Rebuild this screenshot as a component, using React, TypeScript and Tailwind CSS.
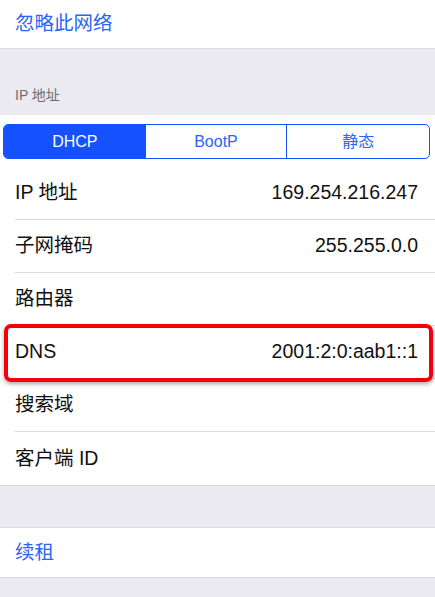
import React from "react";

const font = { fontFamily: '"Liberation Sans", "Noto Sans CJK SC", sans-serif' };

const rows = [
  { label: "IP 地址", value: "169.254.216.247" },
  { label: "子网掩码", value: "255.255.0.0" },
  { label: "路由器", value: "" },
  { label: "DNS", value: "2001:2:0:aab1::1", marked: true },
  { label: "搜索域", value: "" },
  { label: "客户端 ID", value: "" },
];

const Row = ({ label, value, marked, last }: { label: string; value: string; marked?: boolean; last?: boolean }) => (
  <div className="relative pl-[15px]">
    <div
      className={`flex h-[53px] items-center justify-between pr-[17px] text-[19.5px] text-[#111] ${
        last ? "" : "border-b border-[#d9d9de]"
      }`}
    >
      <span>{label}</span>
      <span>{value}</span>
    </div>
    {marked && (
      <div className="pointer-events-none absolute -top-[2px] -bottom-[3px] left-[4px] right-[2px] rounded-[7px] border-[4px] border-[#f5000a] shadow-[0_2px_4px_rgba(0,0,0,0.35)]" />
    )}
  </div>
);

export default function App() {
  return (
    <div style={font} className="h-[597px] w-[435px] overflow-hidden bg-[#ebeaf1]">
      <div className="flex h-[49px] items-center border-b border-[#d9d9de] bg-white px-[15px] text-[19.5px] text-[#2a66f6]">
        忽略此网络
      </div>

      <div className="flex h-[66px] items-end px-[15px] pb-[9px] text-[14px] text-[#6d6d72]">IP 地址</div>

      <div className="bg-white pt-[9px]">
        <div className="mx-[3px] mr-[5px] grid h-[35px] grid-cols-3 overflow-hidden rounded-[5px] border border-[#1551ff] text-[16px]">
          <div className="flex items-center justify-center bg-[#1551ff] text-white">DHCP</div>
          <div className="flex items-center justify-center border-r border-[#1551ff] text-[#2a66f6]">BootP</div>
          <div className="flex items-center justify-center text-[#2a66f6]">静态</div>
        </div>
        <div className="mt-[8px]">
          {rows.map((r, i) => (
            <Row key={r.label} {...r} last={i === rows.length - 1} />
          ))}
        </div>
      </div>

      <div className="h-[43px] border-t border-b border-[#d9d9de]" />

      <div className="flex h-[50px] items-center border-b border-[#d9d9de] bg-white px-[15px] text-[19.5px] text-[#2a66f6]">
        续租
      </div>
    </div>
  );
}
